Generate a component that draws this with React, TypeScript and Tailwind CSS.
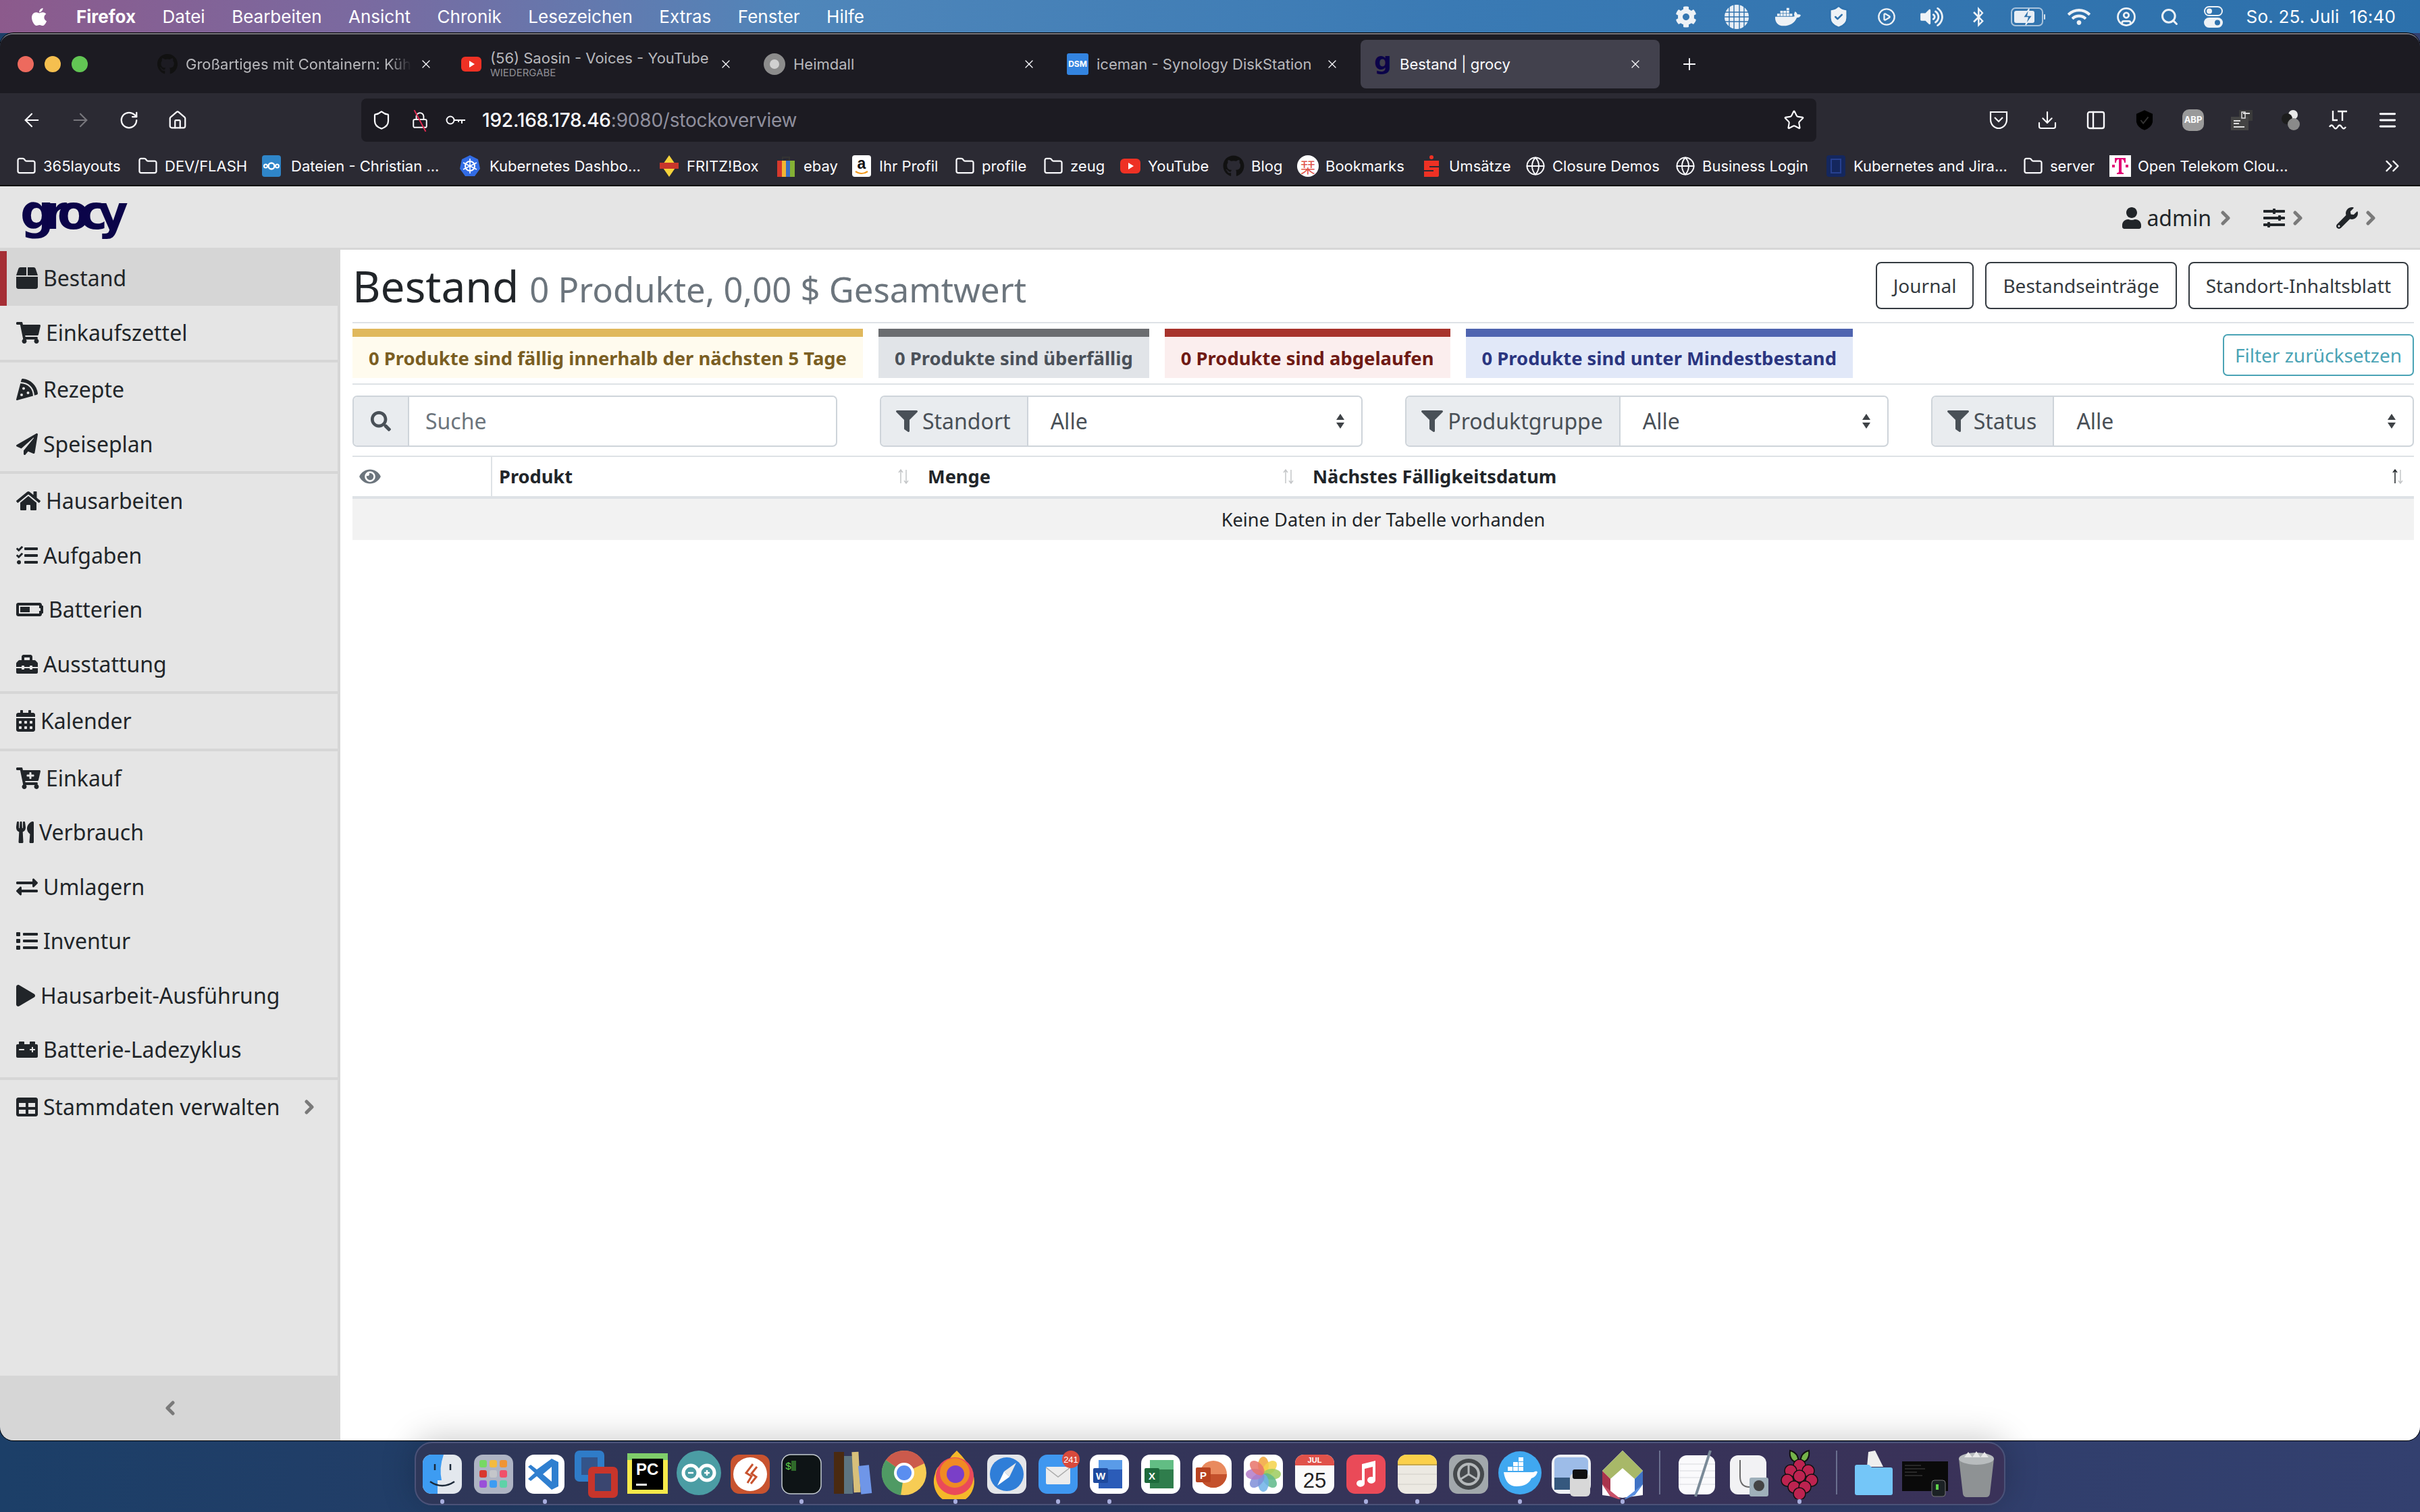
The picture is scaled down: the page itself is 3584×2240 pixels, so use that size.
import React from "react";
import {
  ArrowLeft,
  ArrowRight,
  ChevronsRight,
  Download,
  Folder,
  Globe,
  Home,
  Lock,
  Menu,
  PanelLeft,
  Plus,
  RotateCw,
  Search,
  Shield,
  ShieldCheck,
  Star,
  X,
  CirclePlay,
  CircleUser,
} from "lucide-react";
import {
  FaApple,
  FaBatteryHalf,
  FaBluetoothB,
  FaBox,
  FaCalendarAlt,
  FaCarBattery,
  FaCartPlus,
  FaCog,
  FaDocker,
  FaExchangeAlt,
  FaEye,
  FaFilter,
  FaGithub,
  FaHome,
  FaList,
  FaPaperPlane,
  FaPizzaSlice,
  FaPlay,
  FaSearch,
  FaShoppingCart,
  FaSlidersH,
  FaTable,
  FaTasks,
  FaToolbox,
  FaUser,
  FaUtensils,
  FaVolumeUp,
  FaWifi,
  FaWrench,
} from "react-icons/fa";

const navGroups = [
  [
    { label: "Bestand", icon: <FaBox className="h-[32px] w-[32px] shrink-0" />, active: true },
    { label: "Einkaufszettel", icon: <FaShoppingCart className="h-[32px] w-[36px] shrink-0" /> },
  ],
  [
    { label: "Rezepte", icon: <FaPizzaSlice className="h-[32px] w-[32px] shrink-0" /> },
    { label: "Speiseplan", icon: <FaPaperPlane className="h-[32px] w-[32px] shrink-0" /> },
  ],
  [
    { label: "Hausarbeiten", icon: <FaHome className="h-[32px] w-[36px] shrink-0" /> },
    { label: "Aufgaben", icon: <FaTasks className="h-[32px] w-[32px] shrink-0" /> },
    { label: "Batterien", icon: <FaBatteryHalf className="h-[32px] w-[40px] shrink-0" /> },
    { label: "Ausstattung", icon: <FaToolbox className="h-[32px] w-[32px] shrink-0" /> },
  ],
  [{ label: "Kalender", icon: <FaCalendarAlt className="h-[32px] w-[28px] shrink-0" /> }],
  [
    { label: "Einkauf", icon: <FaCartPlus className="h-[32px] w-[36px] shrink-0" /> },
    { label: "Verbrauch", icon: <FaUtensils className="h-[32px] w-[26px] shrink-0" /> },
    { label: "Umlagern", icon: <FaExchangeAlt className="h-[32px] w-[32px] shrink-0" /> },
    { label: "Inventur", icon: <FaList className="h-[32px] w-[32px] shrink-0" /> },
    { label: "Hausarbeit-Ausführung", icon: <FaPlay className="h-[32px] w-[28px] shrink-0" /> },
    { label: "Batterie-Ladezyklus", icon: <FaCarBattery className="h-[32px] w-[32px] shrink-0" /> },
  ],
  [{ label: "Stammdaten verwalten", icon: <FaTable className="h-[32px] w-[32px] shrink-0" />, more: true }],
];

const Tile = ({ bg, children }: { bg: string; children?: React.ReactNode }) => (
  <svg viewBox="0 0 32 32" className="h-[32px] w-[32px] shrink-0">
    <rect x="2" y="0" width="28" height="32" rx="4" fill={bg} />
    {children}
  </svg>
);

const FolderMark = () => <Folder className="h-[30px] w-[30px] shrink-0" strokeWidth={1.8} />;
const GlobeMark = () => <Globe className="h-[30px] w-[30px] shrink-0" strokeWidth={1.6} />;
const YtMark = () => (
  <svg viewBox="0 0 32 32" className="h-[32px] w-[32px] shrink-0">
    <rect x="1" y="5" width="30" height="22" rx="6" fill="#ee3124" />
    <path d="M13 11l8 5-8 5z" fill="#fff" />
  </svg>
);

const bookmarks: { w: string; g?: string; label: string; icon: React.ReactNode }[] = [
  { w: "w-[180px]", label: "365layouts", icon: <FolderMark /> },
  { w: "w-[182px]", label: "DEV/FLASH", icon: <FolderMark /> },
  {
    w: "w-[294px]",
    g: "gap-[13px]",
    label: "Dateien - Christian ...",
    icon: (
      <Tile bg="#2f86c9">
        <circle cx="16" cy="16" r="4.5" fill="none" stroke="#fff" strokeWidth="2.4" />
        <circle cx="7.5" cy="16" r="2.5" fill="none" stroke="#fff" strokeWidth="2" />
        <circle cx="24.5" cy="16" r="2.5" fill="none" stroke="#fff" strokeWidth="2" />
      </Tile>
    ),
  },
  {
    w: "w-[295px]",
    g: "gap-[13px]",
    label: "Kubernetes Dashbo...",
    icon: (
      <svg viewBox="0 0 32 32" className="h-[32px] w-[32px] shrink-0">
        <path d="M16 0l12 6 3 14-8 11H9L1 20 4 6z" fill="#326ce5" />
        <circle cx="16" cy="16" r="7" fill="none" stroke="#fff" strokeWidth="2" />
        <path d="M16 5v22M6 11l20 10M26 11L6 21" stroke="#fff" strokeWidth="1.6" />
      </svg>
    ),
  },
  {
    w: "w-[173px]",
    label: "FRITZ!Box",
    icon: (
      <svg viewBox="0 0 32 32" className="h-[32px] w-[32px] shrink-0">
        <path d="M16 0l11 16-11 16L5 16z" fill="#f5d33b" />
        <rect x="2" y="11" width="28" height="9" fill="#c8352b" />
      </svg>
    ),
  },
  {
    w: "w-[112px]",
    label: "ebay",
    icon: (
      <svg viewBox="0 0 32 32" className="h-[32px] w-[32px] shrink-0">
        <path d="M11 8V3h10v5" fill="none" stroke="#333" strokeWidth="2" />
        <rect x="3" y="8" width="7" height="24" fill="#d5382c" />
        <rect x="10" y="8" width="6" height="24" fill="#f2b632" />
        <rect x="16" y="8" width="6" height="24" fill="#3a6fc4" />
        <rect x="22" y="8" width="7" height="24" fill="#84b135" />
      </svg>
    ),
  },
  {
    w: "w-[154px]",
    label: "Ihr Profil",
    icon: (
      <Tile bg="#fff">
        <text x="16" y="20" textAnchor="middle" fontSize="23" fontWeight="700" fontFamily="Liberation Sans" fill="#111">
          a
        </text>
        <path d="M7 24q9 6 18 0" fill="none" stroke="#f19a1f" strokeWidth="2.2" />
      </Tile>
    ),
  },
  { w: "w-[131px]", label: "profile", icon: <FolderMark /> },
  { w: "w-[113px]", label: "zeug", icon: <FolderMark /> },
  { w: "w-[153px]", label: "YouTube", icon: <YtMark /> },
  { w: "w-[110px]", label: "Blog", icon: <FaGithub className="h-[32px] w-[32px] shrink-0 text-[#111]" /> },
  {
    w: "w-[183px]",
    label: "Bookmarks",
    icon: (
      <span className="flex h-[32px] w-[32px] shrink-0 items-center justify-center rounded-full bg-white font-['Noto_Sans_CJK_JP',sans-serif] text-[22px] text-[#e0564a]">
        栞
      </span>
    ),
  },
  {
    w: "w-[155px]",
    label: "Umsätze",
    icon: (
      <svg viewBox="0 0 32 32" className="h-[32px] w-[32px] shrink-0">
        <circle cx="16" cy="3" r="3" fill="#ee3124" />
        <path d="M5 8h22v8H13v2h14v12a2 2 0 0 1-2 2H5v-8h14v-2H5z" fill="#ee3124" />
      </svg>
    ),
  },
  { w: "w-[222px]", label: "Closure Demos", icon: <GlobeMark /> },
  { w: "w-[222px]", label: "Business Login", icon: <GlobeMark /> },
  {
    w: "w-[293px]",
    label: "Kubernetes and Jira...",
    icon: (
      <Tile bg="#14275e">
        <path d="M9 6h14v20H9z" fill="none" stroke="#27408f" strokeWidth="2" />
      </Tile>
    ),
  },
  { w: "w-[128px]", label: "server", icon: <FolderMark /> },
  {
    w: "w-[270px]",
    label: "Open Telekom Clou...",
    icon: (
      <svg viewBox="0 0 32 32" className="h-[32px] w-[32px] shrink-0">
        <rect width="32" height="32" fill="#fff" />
        <path d="M8 4h16v7h-2q0-5-4-5v18q0 2 3 2v2H11v-2q3 0 3-2V6q-4 0-4 5H8z" fill="#e20074" />
        <rect x="4" y="14" width="4" height="4" fill="#e20074" />
        <rect x="24" y="14" width="4" height="4" fill="#e20074" />
      </svg>
    ),
  },
];

const menuIcons = [
  { w: "w-[75px]", icon: <FaCog className="h-[32px] w-[32px]" /> },
  {
    w: "w-[75px]",
    icon: (
      <svg viewBox="0 0 36 36" className="h-[36px] w-[36px]">
        <circle cx="18" cy="18" r="18" fill="#e8eef5" />
        <path d="M0 11h36M0 18h36M0 25h36M7 2v32M14 0v36M22 0v36M29 2v32" stroke="#2f72ad" strokeWidth="1.4" />
      </svg>
    ),
  },
  { w: "w-[76px]", icon: <FaDocker className="h-[38px] w-[38px]" /> },
  { w: "w-[74px]", icon: <ShieldCheck className="h-[38px] w-[38px]" fill="#eef2f6" stroke="#2f72ad" strokeWidth={1.6} /> },
  { w: "w-[68px]", icon: <CirclePlay className="h-[28px] w-[28px]" strokeWidth={2} /> },
  { w: "w-[67px]", icon: <FaVolumeUp className="h-[30px] w-[34px]" /> },
  { w: "w-[71px]", icon: <FaBluetoothB className="h-[30px] w-[22px]" /> },
  {
    w: "w-[77px]",
    icon: (
      <svg viewBox="0 0 52 28" className="h-[28px] w-[52px]">
        <rect x="1" y="1" width="46" height="26" rx="6" fill="none" stroke="#dce6f0" strokeWidth="2" opacity=".7" />
        <rect x="5" y="5" width="30" height="18" rx="3" fill="#e8eef5" />
        <path d="M27 2l-9 13h7l-3 11 10-14h-7z" fill="#2f72ad" stroke="#e8eef5" strokeWidth="1.5" />
        <rect x="49" y="10" width="2" height="8" rx="1" fill="#dce6f0" />
      </svg>
    ),
  },
  { w: "w-[73px]", icon: <FaWifi className="h-[28px] w-[34px]" /> },
  { w: "w-[66px]", icon: <CircleUser className="h-[30px] w-[30px]" strokeWidth={2.2} /> },
  { w: "w-[63px]", icon: <Search className="h-[28px] w-[28px]" strokeWidth={2.6} /> },
  {
    w: "w-[67px]",
    icon: (
      <svg viewBox="0 0 28 32" className="h-[32px] w-[28px]">
        <rect x="1" y="1" width="26" height="13" rx="6.5" fill="none" stroke="#eef2f6" strokeWidth="2" />
        <circle cx="8" cy="7.5" r="4" fill="#eef2f6" />
        <rect x="0" y="17" width="28" height="15" rx="7.5" fill="#eef2f6" />
        <circle cx="20" cy="24.5" r="4" fill="#2f72ad" />
      </svg>
    ),
  },
];

const TrafficLights = () => (
  <div className="flex w-[213px] shrink-0 items-center gap-[16px] pl-[26px]">
    <span className="h-[24px] w-[24px] rounded-full bg-[#ed6a5e]" />
    <span className="h-[24px] w-[24px] rounded-full bg-[#f5bf4f]" />
    <span className="h-[24px] w-[24px] rounded-full bg-[#62c554]" />
  </div>
);

const TabShell = ({ active, children }: { active?: boolean; children: React.ReactNode }) => (
  <div
    className={`flex h-[72px] w-[443px] shrink-0 items-center gap-[12px] rounded-[8px] pl-[14px] pr-[26px] text-[22px] ${
      active ? "bg-[#42414d] text-[#fbfbfe]" : "text-[#b8b8bc]"
    }`}
  >
    {children}
    <X className="h-[20px] w-[20px] shrink-0 text-[#fbfbfe]" strokeWidth={1.5} />
  </div>
);

const TabBar = () => (
  <div className="flex h-[87px] shrink-0 items-center gap-[6px] bg-[#1c1b22]">
    <TrafficLights />
    <TabShell>
      <FaGithub className="h-[32px] w-[30px] shrink-0 text-[#111]" />
      <span className="flex-1 whitespace-nowrap pt-[2px] [mask-image:linear-gradient(to_right,black_90%,transparent)]">
        Großartiges mit Containern: Küh
      </span>
    </TabShell>
    <TabShell>
      <span className="w-[30px] shrink-0">
        <YtMark />
      </span>
      <span className="flex flex-1 flex-col pl-[2px]">
        <span className="whitespace-nowrap text-[22px] leading-[26px]">(56) Saosin - Voices - YouTube</span>
        <span className="text-[15px] leading-[18px] text-[#8f8f95]">WIEDERGABE</span>
      </span>
    </TabShell>
    <TabShell>
      <span className="flex h-[32px] w-[32px] shrink-0 items-center justify-center rounded-full bg-[#8c8c8c]">
        <span className="h-[14px] w-[14px] rounded-full bg-[#d0d0d0]" />
      </span>
      <span className="flex-1 pt-[2px]">Heimdall</span>
    </TabShell>
    <TabShell>
      <span className="flex h-[32px] w-[32px] shrink-0 items-center justify-center rounded-[3px] bg-[#3384e0] text-[12px] font-bold text-white">
        DSM
      </span>
      <span className="flex-1 whitespace-nowrap pt-[2px]">iceman - Synology DiskStation</span>
    </TabShell>
    <TabShell active>
      <span className="w-[32px] shrink-0 pb-[8px] pl-[6px] font-['DejaVu_Sans',sans-serif] text-[36px] font-bold leading-[30px] text-[#0b0449]">
        g
      </span>
      <span className="flex-1 pt-[2px]">Bestand | grocy</span>
    </TabShell>
    <Plus className="ml-[24px] h-[28px] w-[28px] text-[#fbfbfe]" strokeWidth={1.6} />
  </div>
);

const Slot = ({ children }: { children: React.ReactNode }) => (
  <span className="flex h-[64px] w-[72px] shrink-0 items-center justify-center">{children}</span>
);

const Toolbar = () => (
  <div className="flex h-[72px] shrink-0 items-end bg-[#2b2a33] pl-[11px] text-[#fbfbfe]">
    <Slot><ArrowLeft className="h-[32px] w-[32px]" strokeWidth={1.6} /></Slot>
    <Slot><ArrowRight className="h-[32px] w-[32px] text-[#77767c]" strokeWidth={1.6} /></Slot>
    <Slot><RotateCw className="h-[30px] w-[30px]" strokeWidth={1.8} /></Slot>
    <Slot><Home className="h-[30px] w-[30px]" strokeWidth={1.8} /></Slot>
    <div className="ml-[236px] flex h-[64px] w-[2155px] shrink-0 items-center rounded-[8px] bg-[#1c1b22] pl-[15px] pr-[17px]">
      <Shield className="h-[32px] w-[30px] shrink-0" strokeWidth={1.8} />
      <span className="relative ml-[29px] shrink-0">
        <Lock className="h-[32px] w-[26px]" strokeWidth={1.8} />
        <span className="absolute left-[12px] top-[-1px] h-[36px] w-[2px] -rotate-[28deg] bg-[#e22850]" />
      </span>
      <svg viewBox="0 0 30 16" className="ml-[25px] h-[16px] w-[30px] shrink-0" fill="none" stroke="#fbfbfe" strokeWidth="2">
        <circle cx="7" cy="8" r="5.5" />
        <path d="M13 8h16M24 8v5M19 8v3" />
      </svg>
      <span className="ml-[24px] text-[28px] font-medium tracking-[-0.2px]">
        192.168.178.46<span className="font-normal text-[#8f8f9d]">:9080/stockoverview</span>
      </span>
      <Star className="ml-auto h-[32px] w-[32px] shrink-0" strokeWidth={1.6} />
    </div>
    <div className="ml-[234px] flex shrink-0">
      <Slot>
        <svg viewBox="0 0 28 30" className="h-[30px] w-[28px]" fill="none" stroke="#fbfbfe" strokeWidth="2.2">
          <path d="M2 3h24v11a12 13 0 0 1-24 0z" />
          <path d="M8 11l6 6 6-6" />
        </svg>
      </Slot>
      <Slot><Download className="h-[32px] w-[32px]" strokeWidth={1.6} /></Slot>
      <Slot><PanelLeft className="h-[32px] w-[32px]" strokeWidth={1.8} /></Slot>
      <Slot>
        <svg viewBox="0 0 28 32" className="h-[32px] w-[26px]">
          <path d="M14 0l13 6v13q-2 9-13 13Q3 28 1 19V6z" fill="#000" />
          <path d="M8 16l4 5 8-10" fill="none" stroke="#333" strokeWidth="2" />
        </svg>
      </Slot>
      <Slot>
        <span className="flex h-[32px] w-[32px] items-center justify-center rounded-[10px] bg-[#9a9a9a] text-[13px] font-bold text-white">ABP</span>
      </Slot>
      <Slot>
        <svg viewBox="0 0 32 30" className="h-[30px] w-[32px]">
          <rect x="12" y="0" width="20" height="16" fill="#3a3a3a" />
          <rect x="0" y="10" width="26" height="20" fill="#444" />
          <path d="M4 16h10M4 20h8M4 25h16M18 5h10" stroke="#ddd" strokeWidth="2" />
          <rect x="16" y="3" width="5" height="9" fill="none" stroke="#ddd" strokeWidth="1.5" />
        </svg>
      </Slot>
      <Slot>
        <svg viewBox="0 0 32 32" className="h-[32px] w-[32px]">
          <circle cx="20" cy="8" r="7" fill="#e8e8e8" />
          <circle cx="11" cy="14" r="8" fill="#1d1d1d" />
          <circle cx="21" cy="22" r="9" fill="#8a8a8a" />
        </svg>
      </Slot>
      <Slot>
        <svg viewBox="0 0 30 32" className="h-[32px] w-[30px]" fill="none" stroke="#fbfbfe" strokeWidth="2.4">
          <path d="M6 2v14h7M13 3h14M20 3v14" />
          <path d="M1 26q3-5 6 0t6 0 6 0 6 0" />
        </svg>
      </Slot>
      <Slot><Menu className="h-[32px] w-[32px]" strokeWidth={2.2} /></Slot>
    </div>
  </div>
);

const Bookmarks = () => (
  <div className="flex h-[64px] shrink-0 items-center bg-[#2b2a33] pl-[24px] pr-[24px] pt-[8px] text-[22px] text-[#fbfbfe]">
    {bookmarks.map((b) => (
      <div key={b.label} className={`flex shrink-0 items-center ${b.g ?? "gap-[10px]"} ${b.w}`}>
        {b.icon}
        <span className="whitespace-nowrap">{b.label}</span>
      </div>
    ))}
    <ChevronsRight className="ml-auto h-[34px] w-[34px]" strokeWidth={1.6} />
  </div>
);

// the fa chevron comes out too thin at this size, so it is drawn with a stroke
const Chev = ({ left }: { left?: boolean }) => (
  <svg viewBox="0 0 14 22" className="h-[22px] w-[14px] shrink-0" fill="none" stroke="#7a7a7a" strokeWidth="5" strokeLinecap="round" strokeLinejoin="round">
    <path d={left ? "M11 3L3 11l8 8" : "M3 3l8 8-8 8"} />
  </svg>
);

const TopNav = () => (
  <div className="box-content flex h-[91px] shrink-0 items-center justify-between border-b-[3px] border-[#d6d6d6] bg-[#e5e5e5] text-[#212529]">
    <span className="ml-[30px] mt-[-14px] font-['DejaVu_Sans',sans-serif] text-[70px] font-bold leading-[70px] tracking-[-15px] text-[#0b0449]">
      grocy
    </span>
    <div className="mr-[66px] flex items-center pt-[2px]">
      <FaUser className="h-[32px] w-[28px]" />
      <span className="ml-[8px] text-[32px]">admin</span>
      <span className="ml-[14px]"><Chev /></span>
      <FaSlidersH className="ml-[49px] h-[32px] w-[32px]" />
      <span className="ml-[12px]"><Chev /></span>
      <FaWrench className="ml-[50px] h-[32px] w-[32px]" />
      <span className="ml-[12px]"><Chev /></span>
    </div>
  </div>
);

const Sidebar = () => (
  <aside className="flex w-[504px] shrink-0 flex-col bg-[#d6d6d6] pt-[2px] text-[32px] text-[#212529]">
    <div className="flex flex-1 flex-col gap-[4px]">
      {navGroups.map((group, i) => (
        <div key={i} className={`flex flex-col ${i === navGroups.length - 1 ? "flex-1" : ""}`}>
          {group.map((item) => (
            <div
              key={item.label}
              className={`flex h-[80.5px] shrink-0 items-center gap-[8px] ${
                item.active
                  ? "border-l-[10px] border-[#a52e35] bg-[#d6d6d6] pl-[14px]"
                  : "mr-[4px] bg-[#e5e5e5] pl-[24px]"
              }`}
            >
              {item.icon}
              <span className="whitespace-nowrap">{item.label}</span>
              {item.more && <span className="ml-[28px]"><Chev /></span>}
            </div>
          ))}
          {i === navGroups.length - 1 && <div className="mr-[4px] flex-1 bg-[#e5e5e5]" />}
        </div>
      ))}
    </div>
    <div className="flex h-[96px] shrink-0 items-center justify-center">
      <Chev left />
    </div>
  </aside>
);

const OutlineBtn = ({ children }: { children: React.ReactNode }) => (
  <span className="flex h-[70px] items-center rounded-[8px] border-2 border-[#343a40] px-[24px] text-[28px] text-[#343a40]">
    {children}
  </span>
);

const alerts = [
  { text: "0 Produkte sind fällig innerhalb der nächsten 5 Tage", c: "border-[#e0b85c] bg-[#fffbee] text-[#7a5e22]" },
  { text: "0 Produkte sind überfällig", c: "border-[#6b6d70] bg-[#e1e4e8] text-[#4a5058]" },
  { text: "0 Produkte sind abgelaufen", c: "border-[#a8332c] bg-[#fbeeee] text-[#6f1a14]" },
  { text: "0 Produkte sind unter Mindestbestand", c: "border-[#4f64b0] bg-[#e1e8f8] text-[#2a3580]" },
];

const UpDown = () => (
  <svg viewBox="0 0 14 26" className="h-[26px] w-[14px] shrink-0" fill="#3f4347">
    <path d="M7 2l6 9H1zM7 24l6-9H1z" />
  </svg>
);

const FilterGroup = ({ label }: { label: string }) => (
  <div className="flex h-[76px] flex-1 overflow-hidden rounded-[7px] border-2 border-[#ced4da] text-[32px] text-[#495057]">
    <span className="flex shrink-0 items-center gap-[7px] border-r-2 border-[#ced4da] bg-[#e9ecef] pl-[22px] pr-[24px]">
      <FaFilter className="h-[32px] w-[32px]" />
      {label}
    </span>
    <span className="flex flex-1 items-center justify-between pl-[33px] pr-[24px]">
      Alle
      <UpDown />
    </span>
  </div>
);

const SortMark = ({ dark }: { dark?: boolean }) => (
  <svg viewBox="0 0 16 22" className="h-[22px] w-[16px] shrink-0" fill="none" strokeWidth="1.5">
    <path d="M4 21V2M1 5l3-4 3 4" stroke={dark ? "#212529" : "#c4c6c8"} />
    <path d="M12 1v19M9 17l3 4 3-4" stroke="#c4c6c8" />
  </svg>
);

const Main = () => (
  <main className="min-w-0 flex-1 bg-white pl-[18px] pr-[9px] text-[#212529]">
    <div className="flex h-[107px] items-center justify-between">
      <h2 className="flex items-baseline gap-[16px] text-[64px] leading-none">
        Bestand
        <span className="text-[50.8px] text-[#6c757d]">0 Produkte, 0,00 $ Gesamtwert</span>
      </h2>
      <div className="mr-[8px] flex gap-[17px] pb-[2px]">
        <OutlineBtn>Journal</OutlineBtn>
        <OutlineBtn>Bestandseinträge</OutlineBtn>
        <OutlineBtn>Standort-Inhaltsblatt</OutlineBtn>
      </div>
    </div>
    <div className="flex h-[93px] items-start border-y-2 border-[#dee2e6] pt-[8px]">
      <div className="flex gap-[23px]">
        {alerts.map((a) => (
          <div key={a.text} className={`flex h-[73px] items-center border-t-[12px] px-[24px] pt-[2px] text-[27.4px] font-bold ${a.c}`}>
            {a.text}
          </div>
        ))}
      </div>
      <span className="ml-auto mt-[8px] flex h-[62px] items-center rounded-[7px] border-2 border-[#4aa3b5] px-[16px] text-[28px] text-[#4aa3b5]">
        Filter zurücksetzen
      </span>
    </div>
    <div className="flex h-[107px] gap-[63px] border-b-2 border-[#dee2e6] pt-[16px]">
      <div className="flex h-[76px] w-[718px] shrink-0 overflow-hidden rounded-[7px] border-2 border-[#ced4da] text-[32px]">
        <span className="flex w-[82px] shrink-0 items-center justify-center border-r-2 border-[#ced4da] bg-[#e9ecef] text-[#495057]">
          <FaSearch className="h-[30px] w-[30px]" />
        </span>
        <span className="flex flex-1 items-center pl-[24px] text-[#6c757d]">Suche</span>
      </div>
      <FilterGroup label="Standort" />
      <FilterGroup label="Produktgruppe" />
      <FilterGroup label="Status" />
    </div>
    <div className="grid h-[62px] grid-cols-[207px_635px_570px_1fr] border-b-4 border-[#dee2e6] text-[27.2px] font-bold">
      <span className="flex items-center border-r-2 border-[#dee2e6] pl-[10px] text-[#6c757d]">
        <FaEye className="h-[28px] w-[32px]" />
      </span>
      <span className="flex items-center justify-between pl-[10px] pr-[18px]">
        Produkt
        <SortMark />
      </span>
      <span className="flex items-center justify-between pl-[10px] pr-[18px]">
        Menge
        <SortMark />
      </span>
      <span className="flex items-center justify-between pl-[10px] pr-[16px]">
        Nächstes Fälligkeitsdatum
        <SortMark dark />
      </span>
    </div>
    <div className="flex h-[61px] items-center justify-center bg-[#f2f2f2] pt-[2px] text-[27.2px]">
      Keine Daten in der Tabelle vorhanden
    </div>
  </main>
);

const T = ({ fill, children }: { fill: string; children?: React.ReactNode }) => (
  <>
    <rect x="9" y="6" width="58" height="58" rx="13" fill={fill} />
    {children}
  </>
);

const dockIcons: { dot?: boolean; art: React.ReactNode }[] = [
  {
    dot: true,
    art: (
      <T fill="#e3e8ee">
        <path d="M22 6h18q-7 20-3 38h-6v20h-9A13 13 0 0 1 9 51V19A13 13 0 0 1 22 6z" fill="#3d9cf2" />
        <path d="M27 20v9M50 20v9" stroke="#1c2a3a" strokeWidth="2.5" />
        <path d="M20 46q18 12 36 0" fill="none" stroke="#1c2a3a" strokeWidth="2.5" />
      </T>
    ),
  },
  {
    art: (
      <T fill="#aeb4c4">
        {["#77d864", "#f4bb40", "#ef9433", "#d8382f", "#c4c6ca", "#f0506a", "#9a50d8", "#3d9cf2", "#5ed2a8"].map((f, i) => (
          <rect key={f} x={17 + (i % 3) * 15} y={14 + Math.floor(i / 3) * 15} width="11" height="11" rx="3" fill={f} />
        ))}
      </T>
    ),
  },
  {
    dot: true,
    art: (
      <T fill="#fff">
        <path d="M48 12l10 5v36l-10 5-22-20-9 7-4-3 10-9-10-9 4-3 9 7z" fill="#2f7fd0" />
        <path d="M48 24v22l-13-11z" fill="#fff" />
      </T>
    ),
  },
  {
    art: (
      <>
        <rect x="6" y="0" width="44" height="46" rx="7" fill="#2f7cc8" />
        <rect x="16" y="10" width="24" height="26" fill="#33548a" />
        <rect x="26" y="24" width="44" height="46" rx="7" fill="#c8352b" />
        <rect x="36" y="34" width="24" height="26" fill="#3a4670" />
      </>
    ),
  },
  {
    art: (
      <>
        <rect x="8" y="4" width="60" height="60" fill="#f6e94a" />
        <path d="M8 4h60v10H8z" fill="#7fce6a" />
        <rect x="15" y="12" width="46" height="46" fill="#000" />
        <text x="21" y="36" fontSize="24" fontWeight="700" fontFamily="Liberation Sans" fill="#fff">PC</text>
        <rect x="21" y="49" width="16" height="3" fill="#fff" />
      </>
    ),
  },
  {
    art: (
      <>
        <circle cx="38" cy="33" r="33" fill="#4b9da4" />
        <circle cx="26" cy="33" r="11" fill="none" stroke="#fff" strokeWidth="5" />
        <circle cx="50" cy="33" r="11" fill="none" stroke="#fff" strokeWidth="5" />
        <path d="M22 33h8M46 33h8M50 29v8" stroke="#fff" strokeWidth="2.5" />
      </>
    ),
  },
  {
    art: (
      <T fill="#c8532f">
        <circle cx="38" cy="35" r="25" fill="#fff" />
        <path d="M42 20l-10 13 8 5-6 10M48 24l-8 10 7 5-8 10" fill="none" stroke="#c8532f" strokeWidth="3" />
      </T>
    ),
  },
  {
    dot: true,
    art: (
      <>
        <rect x="9" y="6" width="58" height="58" rx="13" fill="#0e1416" stroke="#c4cbd0" strokeWidth="1.5" />
        <text x="14" y="28" fontSize="15" fontFamily="Liberation Mono" fill="#5ed04a">$</text>
        <rect x="23" y="15" width="7" height="15" fill="#2f6a2a" />
      </>
    ),
  },
  {
    art: (
      <>
        <rect x="10" y="2" width="15" height="62" fill="#4a2a10" />
        <rect x="25" y="8" width="13" height="56" fill="#5d7480" />
        <rect x="38" y="2" width="10" height="60" fill="#d8c07a" transform="rotate(-3 43 32)" />
        <rect x="48" y="22" width="16" height="42" fill="#6f96e8" transform="rotate(-6 56 42)" />
      </>
    ),
  },
  {
    art: (
      <>
        <circle cx="38" cy="33" r="33" fill="#f7cc54" />
        <path d="M38 33L11 14A33 33 0 0 1 68 19z" fill="#cb5a4c" />
        <path d="M38 33l-27-19a33 33 0 0 0 22 52z" fill="#4f9a64" />
        <circle cx="38" cy="33" r="15" fill="#fff" />
        <circle cx="38" cy="33" r="11" fill="#5a8ef0" />
      </>
    ),
  },
  {
    dot: true,
    art: (
      <>
        <path d="M40 0q16 16 22 30a30 32 0 1 1-54 4q2-10 8-12 2 6 6 8 2-16 18-30z" fill="#f4b82a" />
        <circle cx="37" cy="38" r="28" fill="#ea4a5a" />
        <circle cx="37" cy="33" r="22" fill="#f08a24" />
        <circle cx="38" cy="35" r="13" fill="#7a3fc8" />
      </>
    ),
  },
  {
    art: (
      <T fill="#e4e6ea">
        <circle cx="38" cy="35" r="25" fill="#2f7ed8" />
        <path d="M52 18L34 31l8 8z" fill="#e8e8e8" />
        <path d="M24 52l10-21 8 8z" fill="#fff" />
      </T>
    ),
  },
  {
    dot: true,
    art: (
      <>
        <rect x="9" y="6" width="58" height="58" rx="13" fill="#3f97f0" />
        <rect x="20" y="24" width="36" height="26" rx="2" fill="#ececec" />
        <path d="M20 25l18 14 18-14" fill="none" stroke="#aaa" strokeWidth="1.5" />
        <circle cx="57" cy="13" r="13" fill="#d94a3c" />
        <text x="57" y="18" textAnchor="middle" fontSize="13" fontFamily="Liberation Sans" fill="#fff">241</text>
      </>
    ),
  },
  {
    dot: true,
    art: (
      <T fill="#fff">
        <rect x="22" y="14" width="35" height="42" fill="#2b5cb8" />
        <rect x="22" y="14" width="35" height="14" fill="#5a9be8" />
        <rect x="14" y="26" width="22" height="22" rx="2" fill="#1e4a9e" />
        <text x="25" y="43" textAnchor="middle" fontSize="15" fontWeight="700" fontFamily="Liberation Sans" fill="#fff">W</text>
      </T>
    ),
  },
  {
    art: (
      <T fill="#fff">
        <rect x="22" y="14" width="35" height="42" fill="#2f7d4c" />
        <rect x="22" y="14" width="35" height="14" fill="#62bd84" />
        <rect x="14" y="26" width="22" height="22" rx="2" fill="#1e6a3c" />
        <text x="25" y="43" textAnchor="middle" fontSize="15" fontWeight="700" fontFamily="Liberation Sans" fill="#fff">X</text>
      </T>
    ),
  },
  {
    art: (
      <T fill="#fff">
        <circle cx="40" cy="35" r="20" fill="#e98a5e" />
        <path d="M40 35h20a20 20 0 0 1-40 0z" fill="#c4512c" />
        <rect x="14" y="25" width="22" height="22" rx="2" fill="#b8431f" />
        <text x="25" y="42" textAnchor="middle" fontSize="15" fontWeight="700" fontFamily="Liberation Sans" fill="#fff">P</text>
      </T>
    ),
  },
  {
    art: (
      <T fill="#fff">
        {["#f2a63a", "#f5d24a", "#9ccb5e", "#5fb88a", "#6fb2e8", "#7f8fd8", "#b27ac8", "#e8736a"].map((f, i) => (
          <ellipse key={f} cx="38" cy="22" rx="8" ry="13" fill={f} opacity=".85" transform={`rotate(${i * 45} 38 35)`} />
        ))}
      </T>
    ),
  },
  {
    art: (
      <T fill="#fafafa">
        <path d="M9 19A13 13 0 0 1 22 6h32a13 13 0 0 1 13 13v3H9z" fill="#e0524a" />
        <text x="38" y="18" textAnchor="middle" fontSize="11" fontWeight="700" fontFamily="Liberation Sans" fill="#fff">JUL</text>
        <text x="38" y="55" textAnchor="middle" fontSize="31" fontFamily="Liberation Sans" fill="#222">25</text>
      </T>
    ),
  },
  {
    dot: true,
    art: (
      <T fill="#ea4a58">
        <path d="M32 20l20-5v29a6 5 0 1 1-4-5V24l-12 3v22a6 5 0 1 1-4-5z" fill="#fff" />
      </T>
    ),
  },
  {
    dot: true,
    art: (
      <T fill="#ece9e2">
        <path d="M9 19A13 13 0 0 1 22 6h32a13 13 0 0 1 13 13v2H9z" fill="#fbd04a" />
        <path d="M9 21h58" stroke="#c8a84a" strokeWidth="2" />
        <path d="M9 35h58M9 50h58" stroke="#d0cec8" strokeWidth="1" />
      </T>
    ),
  },
  {
    art: (
      <T fill="#a2a8ac">
        <circle cx="38" cy="35" r="23" fill="#45494c" />
        <circle cx="38" cy="35" r="15" fill="none" stroke="#b4b8ba" strokeWidth="4" />
        <path d="M38 35V20M38 35l13 8M38 35l-13 8" stroke="#b4b8ba" strokeWidth="3" />
      </T>
    ),
  },
  {
    dot: true,
    art: (
      <>
        <circle cx="38" cy="33" r="32" fill="#40a8f0" />
        <path d="M14 32h44q5-3 6 0-3 8-9 9-5 12-22 12-16 0-19-21z" fill="#fff" />
        <path d="M20 24h7v6h-7zM28 24h7v6h-7zM36 24h7v6h-7zM28 17h7v6h-7zM36 17h7v6h-7zM36 10h7v6h-7z" fill="#fff" />
      </>
    ),
  },
  {
    art: (
      <>
        <rect x="9" y="6" width="58" height="58" rx="13" fill="#eef0f4" />
        <rect x="13" y="10" width="50" height="48" rx="6" fill="#9dbce8" />
        <rect x="13" y="40" width="50" height="18" fill="#35587e" />
        <rect x="36" y="34" width="30" height="34" rx="6" fill="#d8d8d8" />
        <rect x="40" y="28" width="22" height="14" rx="3" fill="#111" />
      </>
    ),
  },
  {
    dot: true,
    art: (
      <>
        <path d="M38 0l30 30v36L38 70 8 66V30z" fill="#fff" />
        <path d="M38 0l30 30-12 12-18-16-18 16L8 30z" fill="#a8b868" />
        <path d="M8 30l12 12v26L8 50z" fill="#a8344c" />
        <path d="M68 30L56 42v24l12-16z" fill="#3f72c4" />
        <path d="M8 50l30 24-18-6z" fill="#c85068" />
        <path d="M68 50L38 74l18-8z" fill="#5a8fe0" />
      </>
    ),
  },
  {
    art: (
      <>
        <rect x="11" y="7" width="54" height="58" rx="12" fill="#fafafc" />
        <path d="M11 20h54M11 30h54M11 40h54M11 50h54" stroke="#d8dade" strokeWidth="1.2" />
        <path d="M58 0L36 68" stroke="#7a8a98" strokeWidth="4" />
      </>
    ),
  },
  {
    art: (
      <>
        <rect x="11" y="7" width="54" height="58" rx="12" fill="#f2f2f4" />
        <path d="M26 14v24q0 16 14 16" fill="none" stroke="#6a6a6a" strokeWidth="2" />
        <rect x="40" y="40" width="28" height="28" rx="3" fill="#9fb0ba" />
        <circle cx="54" cy="52" r="8" fill="#444" />
      </>
    ),
  },
  {
    dot: true,
    art: (
      <>
        <path d="M24 0q14 4 12 18Q22 16 24 0zM52 0q2 16-12 18-2-14 12-18z" fill="#75b34a" stroke="#111" strokeWidth="2" />
        {[[38, 22], [25, 30], [51, 30], [38, 38], [20, 44], [56, 44], [30, 54], [46, 54], [38, 64]].map(([x, y]) => (
          <circle key={`${x}-${y}`} cx={x} cy={y} r="9" fill="#bd2350" stroke="#111" strokeWidth="1.5" />
        ))}
      </>
    ),
  },
  {
    art: (
      <>
        <path d="M30 2l10-2 12 24H28z" fill="#eee" />
        <path d="M10 24a3 3 0 0 1 3-3h18l4 4h28a3 3 0 0 1 3 3v35a3 3 0 0 1-3 3H13a3 3 0 0 1-3-3z" fill="#74c6f8" />
      </>
    ),
  },
  {
    art: (
      <>
        <rect x="4" y="16" width="68" height="44" fill="#0a0a0a" />
        <path d="M8 22h24M8 27h30M8 32h18M8 37h26" stroke="#333" strokeWidth="1.5" />
        <rect x="48" y="44" width="20" height="24" rx="4" fill="#1b2124" stroke="#777" />
        <rect x="54" y="50" width="4" height="8" fill="#5ed04a" />
      </>
    ),
  },
  {
    art: (
      <>
        <path d="M12 12h52l-6 52a6 6 0 0 1-6 5H24a6 6 0 0 1-6-5z" fill="#8e9294" />
        <ellipse cx="38" cy="12" rx="26" ry="9" fill="#b8bcbe" />
        <path d="M20 10l6-8 6 8 6-9 6 9 6-8 6 8" fill="#e8e8e8" />
      </>
    ),
  },
];

const Dock = () => (
  <div className="relative z-10 mt-[2px] flex h-[94px] w-[2356px] items-start rounded-[26px] border-2 border-[#4b5278] bg-[linear-gradient(90deg,#2e3759,#3a3259)] pl-[1px] pt-[7px] shadow-[0_-4px_50px_rgba(0,0,0,0.22)]">
    {dockIcons.map((d, i) => (
      <React.Fragment key={i}>
        {(i === 24 || i === 27) && (
          <span className="flex w-[34px] shrink-0 justify-center self-stretch pb-[14px] pt-[4px]">
            <span className="w-[2px] bg-[#6a6f8e]" />
          </span>
        )}
        <div className="flex w-[76px] shrink-0 flex-col items-center">
          <svg viewBox="0 -4 76 76" className="h-[76px] w-[76px]">
            {d.art}
          </svg>
          {d.dot && <span className="h-[7px] w-[6px] rounded-full bg-[#a8aede]" />}
        </div>
      </React.Fragment>
    ))}
  </div>
);

export default function App() {
  return (
    <div className="flex h-[2240px] w-[3584px] flex-col overflow-hidden bg-[linear-gradient(90deg,#1c3f68,#2c3b66_50%,#33406f)] font-['Inter',sans-serif]">
      <div className="flex h-[49px] shrink-0 items-center bg-[linear-gradient(90deg,#8c5a8c,#7a6aa0_15%,#4f86ba_33%,#3a7ab4_60%,#2c70ab)] text-[26px] text-white">
        <FaApple className="ml-[43px] h-[30px] w-[30px]" />
        <div className="ml-[40px] flex gap-[39.5px]">
          <span className="font-bold">Firefox</span>
          <span>Datei</span>
          <span>Bearbeiten</span>
          <span>Ansicht</span>
          <span>Chronik</span>
          <span>Lesezeichen</span>
          <span>Extras</span>
          <span>Fenster</span>
          <span>Hilfe</span>
        </div>
        <div className="ml-auto flex items-center pr-[36px]">
          {menuIcons.map((m, i) => (
            <span key={i} className={`flex justify-center text-[#eef2f6] ${m.w}`}>
              {m.icon}
            </span>
          ))}
          <span className="ml-[15px] whitespace-pre tracking-[0.2px]">So. 25. Juli  16:40</span>
        </div>
      </div>
      <div className="flex h-[2085px] shrink-0 flex-col overflow-hidden rounded-[20px] border-t-2 border-[#77767c] font-['Inter',sans-serif] shadow-[0_0_0_1px_#000]">
        <TabBar />
        <Toolbar />
        <Bookmarks />
        <div className="h-[2px] shrink-0 bg-black" />
        <div className="flex min-h-0 flex-1 flex-col font-['Noto_Sans',sans-serif]">
          <TopNav />
          <div className="flex min-h-0 flex-1">
            <Sidebar />
            <Main />
          </div>
        </div>
      </div>
      <div className="flex flex-1 justify-center">
        <Dock />
      </div>
    </div>
  );
}
